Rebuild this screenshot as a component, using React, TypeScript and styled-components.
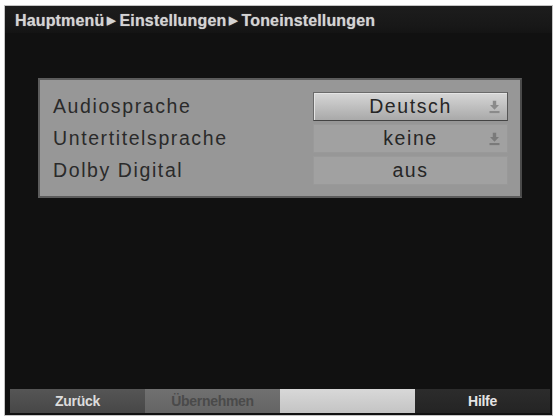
import React from "react";
import styled, { createGlobalStyle } from "styled-components";

const Global = createGlobalStyle`
  html, body { margin: 0; padding: 0; background: #ffffff; }
  body { font-family: "Liberation Sans", Arial, sans-serif; }
`;

const Page = styled.div`
  width: 559px;
  height: 420px;
  padding: 5px 0 0 4px;
  box-sizing: border-box;
`;

const Screen = styled.div`
  width: 547px;
  height: 409px;
  border: 1px solid #c4c4c4;
  background: #111111;
  display: flex;
  flex-direction: column;
`;

const Header = styled.div`
  height: 27px;
  flex: none;
  display: flex;
  align-items: center;
  padding-left: 10px;
  padding-top: 2px;
  box-sizing: border-box;
  background: linear-gradient(#1d1d1d, #181818 70%, #141414);
  color: #d4d4d4;
  font-weight: bold;
  font-size: 16px;
  letter-spacing: 0.15px;
  text-shadow: 0 0 1px rgba(220, 220, 220, 0.6);
  white-space: nowrap;
`;

const Crumb = styled.span`
  margin: 0 4px 0 3px;
  font-size: 11px;
`;

const Content = styled.div`
  flex: 1;
  padding: 45px 0 0 33px;
`;

const Panel = styled.div`
  width: 484px;
  box-sizing: border-box;
  background: #979797;
  border: 2px solid #5c5c5c;
  border-right-color: #4a4a4a;
  padding: 12px 12px 11px 13px;
  display: grid;
  grid-template-columns: 1fr 195px;
  row-gap: 3px;
  align-items: center;
`;

const Label = styled.div`
  font-size: 19.5px;
  letter-spacing: 1.6px;
  color: #2a2a2a;
  line-height: 29px;
`;

const Cell = styled.div<{ $active?: boolean }>`
  position: relative;
  height: 29px;
  box-sizing: border-box;
  display: flex;
  align-items: center;
  justify-content: center;
  font-size: 19.5px;
  letter-spacing: 1.6px;
  color: #262626;
  background: ${(p) =>
    p.$active ? "linear-gradient(#d6d6d6, #c2c2c2 45%, #a9a9a9)" : "#a1a1a1"};
  border: 1px solid ${(p) => (p.$active ? "#6a6a6a" : "#9a9a9a")};
  border-bottom-color: ${(p) => (p.$active ? "#444" : "#999")};
  border-right-color: ${(p) => (p.$active ? "#555" : "#999")};
  box-shadow: ${(p) => (p.$active ? "inset 1px 1px 0 #e4e4e4" : "none")};
`;

const ListIcon = styled.svg`
  position: absolute;
  right: 7px;
  top: 50%;
  transform: translateY(-50%);
`;

const Footer = styled.div`
  height: 24px;
  margin: 0 2px 2px 5px;
  display: grid;
  grid-template-columns: repeat(4, 1fr);
`;

const FooterKey = styled.div<{ $bg: string; $fg: string }>`
  display: flex;
  align-items: center;
  justify-content: center;
  background: ${(p) => p.$bg};
  color: ${(p) => p.$fg};
  font-weight: bold;
  font-size: 14px;
  letter-spacing: -0.3px;
`;

function DownIcon({ color }: { color: string }) {
  return (
    <ListIcon width="11" height="13" viewBox="0 0 11 13">
      <path d="M3.8 0h3.4v4.5h2.8L5.5 9.3 1 4.5h2.8z" fill={color} />
      <rect x="0.5" y="10.5" width="10" height="2.2" fill={color} />
    </ListIcon>
  );
}

const rows = [
  { label: "Audiosprache", value: "Deutsch", list: true, active: true },
  { label: "Untertitelsprache", value: "keine", list: true, active: false },
  { label: "Dolby Digital", value: "aus", list: false, active: false },
];

export default function App() {
  return (
    <>
      <Global />
      <Page>
        <Screen>
          <Header>
            Hauptmenü<Crumb>▶</Crumb>Einstellungen<Crumb>▶</Crumb>Toneinstellungen
          </Header>
          <Content>
            <Panel>
              {rows.map((r) => (
                <React.Fragment key={r.label}>
                  <Label>{r.label}</Label>
                  <Cell $active={r.active}>
                    {r.value}
                    {r.list && <DownIcon color={r.active ? "#8a8a8a" : "#7a7a7a"} />}
                  </Cell>
                </React.Fragment>
              ))}
            </Panel>
          </Content>
          <Footer>
            <FooterKey $bg="linear-gradient(#555, #474747)" $fg="#dcdcdc">Zurück</FooterKey>
            <FooterKey $bg="linear-gradient(#707070, #646464)" $fg="#4a4a4a">Übernehmen</FooterKey>
            <FooterKey $bg="linear-gradient(#d8d8d8, #c4c4c4)" $fg="#c4c4c4">{""}</FooterKey>
            <FooterKey $bg="linear-gradient(#2c2c2c, #242424)" $fg="#e4e4e4">Hilfe</FooterKey>
          </Footer>
        </Screen>
      </Page>
    </>
  );
}
